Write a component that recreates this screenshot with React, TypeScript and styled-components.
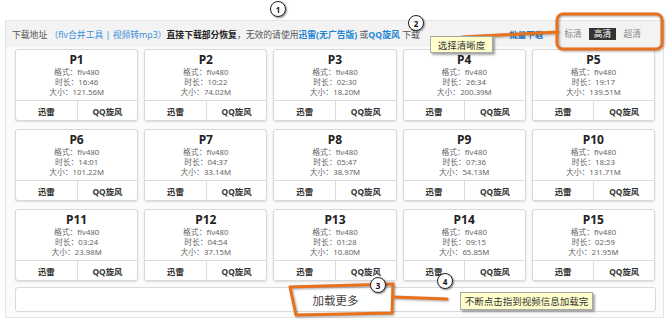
import styled, { createGlobalStyle } from 'styled-components';

const GlobalStyle = createGlobalStyle`
  html, body {
    margin: 0;
    padding: 0;
    background: #fff;
  }
  body {
    font-family: "Noto Sans", "Noto Sans CJK SC", sans-serif;
    color: #444;
  }
`;

interface Part {
  name: string;
  duration: string;
  size: string;
}

const parts: Part[] = [
  { name: 'P1', duration: '16:46', size: '121.56M' },
  { name: 'P2', duration: '10:22', size: '74.02M' },
  { name: 'P3', duration: '02:30', size: '18.20M' },
  { name: 'P4', duration: '26:34', size: '200.39M' },
  { name: 'P5', duration: '19:17', size: '139.51M' },
  { name: 'P6', duration: '14:01', size: '101.22M' },
  { name: 'P7', duration: '04:37', size: '33.14M' },
  { name: 'P8', duration: '05:47', size: '38.97M' },
  { name: 'P9', duration: '07:36', size: '54.13M' },
  { name: 'P10', duration: '18:23', size: '131.71M' },
  { name: 'P11', duration: '03:24', size: '23.98M' },
  { name: 'P12', duration: '04:54', size: '37.15M' },
  { name: 'P13', duration: '01:28', size: '10.80M' },
  { name: 'P14', duration: '09:15', size: '65.85M' },
  { name: 'P15', duration: '02:59', size: '21.95M' },
];

const Page = styled.div`
  position: relative;
  width: 669px;
  height: 326px;
  padding-top: 20px;
  box-sizing: border-box;
  overflow: hidden;
`;

const Panel = styled.div`
  margin-left: 5px;
  width: 659px;
  border: 1px solid #e4e4e4;
  background: #fbfbfb;
  box-sizing: border-box;
  padding-bottom: 5px;
`;

const Header = styled.div`
  height: 26px;
  display: flex;
  align-items: center;
  padding: 0 17px 0 6px;
  background: #f3f3f3;
  font-size: 8.8px;
  color: #555;
  white-space: nowrap;
`;

const Text = styled.span<{ $tone?: 'link' | 'strong' | 'blue' }>`
  color: ${(p) =>
    p.$tone === 'link' ? '#3d8fd9' : p.$tone === 'strong' ? '#222' : p.$tone === 'blue' ? '#1f86d6' : '#555'};
  font-weight: ${(p) => (p.$tone === 'strong' || p.$tone === 'blue' ? 700 : 400)};
`;

const Spacer = styled.div`
  flex: 1;
`;

const Batch = styled.span`
  color: #2a7fc9;
  font-weight: 700;
  font-size: 8.5px;
  margin-right: 14px;
`;

const Quality = styled.span<{ $active?: boolean }>`
  display: inline-block;
  padding: 0 5px;
  line-height: 12px;
  font-size: 8.8px;
  margin-left: 2px;
  color: ${(p) => (p.$active ? '#fff' : '#888')};
  background: ${(p) => (p.$active ? '#333' : 'transparent')};
`;

const Grid = styled.div`
  display: grid;
  grid-template-columns: repeat(5, 1fr);
  column-gap: 6px;
  row-gap: 8px;
  padding: 2px 8px 0 9px;
`;

const Card = styled.div`
  height: 72px;
  box-sizing: border-box;
  background: #fff;
  border: 1px solid #d9d9d9;
  border-radius: 3px;
  box-shadow: 0 1px 2px rgba(0, 0, 0, 0.12);
  display: flex;
  flex-direction: column;
  overflow: hidden;
`;

const Info = styled.div`
  padding: 3px 0 3px;
  text-align: center;
  border-bottom: 1px solid #dcdcdc;
`;

const Title = styled.div`
  font-size: 12px;
  line-height: 14px;
  font-weight: 700;
  color: #222;
`;

const Line = styled.div`
  font-size: 7.8px;
  line-height: 10px;
  height: 10px;
  color: #666;
`;

const Actions = styled.div`
  flex: 1;
  display: grid;
  grid-template-columns: 1fr 1fr;
`;

const Action = styled.div`
  display: flex;
  align-items: center;
  justify-content: center;
  font-size: 8.4px;
  font-weight: 700;
  color: #333;
  & + & {
    border-left: 1px solid #dcdcdc;
  }
`;

const LoadMore = styled.div`
  margin: 6px 7px 0 9px;
  height: 25px;
  box-sizing: border-box;
  border: 1px solid #d9d9d9;
  border-radius: 3px;
  background: #fff;
  display: flex;
  align-items: center;
  justify-content: center;
  font-size: 11.5px;
  color: #444;
`;

const Overlay = styled.svg`
  position: absolute;
  left: 0;
  top: 0;
  pointer-events: none;
  filter: drop-shadow(1px 1px 1px rgba(0, 0, 0, 0.35));
`;

const Badge = styled.div<{ $x: number; $y: number }>`
  position: absolute;
  left: ${(p) => p.$x - 8}px;
  top: ${(p) => p.$y - 8}px;
  width: 16px;
  height: 16px;
  box-sizing: border-box;
  border-radius: 50%;
  border: 1.5px solid #222;
  background: #fff;
  box-shadow: 1px 1px 2px rgba(0, 0, 0, 0.45);
  display: flex;
  align-items: center;
  justify-content: center;
  font-size: 8px;
  font-weight: 700;
  color: #111;
`;

const Note = styled.div<{ $x: number; $y: number; $w: number; $h: number }>`
  position: absolute;
  left: ${(p) => p.$x}px;
  top: ${(p) => p.$y}px;
  width: ${(p) => p.$w}px;
  height: ${(p) => p.$h}px;
  box-sizing: border-box;
  background: #ffffcc;
  border: 1px solid #a8a8a8;
  box-shadow: 2px 2px 2px rgba(0, 0, 0, 0.35);
  display: flex;
  align-items: center;
  justify-content: center;
  font-size: 9.5px;
  color: #333;
  white-space: nowrap;
`;

export default function App() {
  return (
    <Page>
      <GlobalStyle />
      <Panel>
        <Header>
          <Text>下载地址</Text>
          <Text $tone="link">&nbsp;（flv合并工具 | 视频转mp3）</Text>
          <Text $tone="strong">直接下载部分恢复</Text>
          <Text>，无效的请使用 </Text>
          <Text $tone="blue">迅雷(无广告版)</Text>
          <Text>&nbsp;或 </Text>
          <Text $tone="blue">QQ旋风</Text>
          <Text>&nbsp;下载</Text>
          <Spacer />
          <Batch>批量下载</Batch>
          <Quality>标清</Quality>
          <Quality $active>高清</Quality>
          <Quality>超清</Quality>
        </Header>
        <Grid>
          {parts.map((p) => (
            <Card key={p.name}>
              <Info>
                <Title>{p.name}</Title>
                <Line>格式：flv480</Line>
                <Line>时长：{p.duration}</Line>
                <Line>大小：{p.size}</Line>
              </Info>
              <Actions>
                <Action>迅雷</Action>
                <Action>QQ旋风</Action>
              </Actions>
            </Card>
          ))}
        </Grid>
        <LoadMore>加载更多</LoadMore>
      </Panel>

      <Overlay width={669} height={326} viewBox="0 0 669 326">
        <g fill="none" stroke="#e8721c" strokeLinecap="round" strokeLinejoin="round">
          <path d="M462 37 L520 34 L558 32" strokeWidth={3} />
          <rect x={557} y={14} width={105} height={35} rx={6} strokeWidth={3} />
          <path d="M290 287 L393 284 L392 313 L296 315 Z" strokeWidth={3} />
          <path d="M393 297 L447 299" strokeWidth={3} />
        </g>
      </Overlay>

      <Note $x={430} $y={36} $w={63} $h={17}>选择清晰度</Note>
      <Note $x={460} $y={292} $w={133} $h={18}>不断点击指到视频信息加载完</Note>

      <Badge $x={278} $y={9}>1</Badge>
      <Badge $x={416} $y={23}>2</Badge>
      <Badge $x={378} $y={285}>3</Badge>
      <Badge $x={445} $y={281}>4</Badge>
    </Page>
  );
}
